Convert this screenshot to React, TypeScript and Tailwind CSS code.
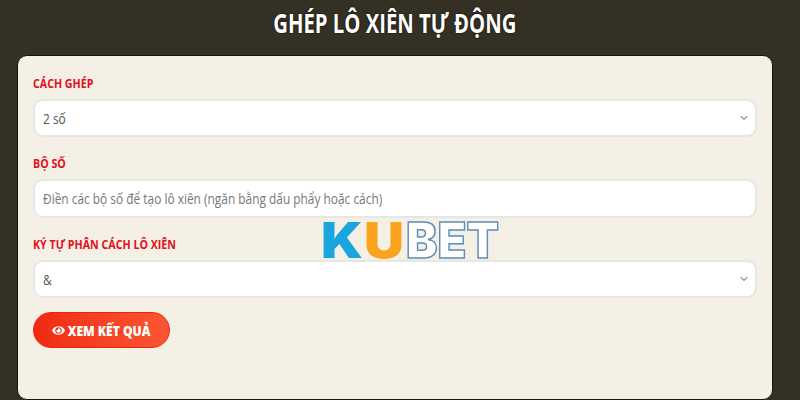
import { ChevronDown } from "lucide-react";
import { FaEye } from "react-icons/fa";

const labelClass =
  "block origin-left scale-x-[0.82] text-[13px] leading-[18px] font-bold whitespace-nowrap text-[#e0111b] uppercase";
const fieldClass =
  "flex items-center justify-between rounded-[10px] border-2 border-[#e6e6e6] bg-white pr-[5px] pl-[8px] text-[14px] text-[#555]";

const Field = ({ label, value }: { label: string; value: string }) => (
  <div className="flex flex-col gap-[7px]">
    <label className={labelClass}>{label}</label>
    <div className={`h-[38px] ${fieldClass}`}>
      <span className="origin-left scale-x-[0.85]">{value}</span>
      <ChevronDown size={12} strokeWidth={2} className="text-[#444]" />
    </div>
  </div>
);

const Logo = () => (
  <svg
    viewBox="0 0 180 42"
    className="absolute top-[219px] left-[321px] h-[42px] w-[180px] overflow-visible"
    fontFamily="Inter, sans-serif"
    fontWeight="900"
  >
    <text x="0" y="39" fontSize="50" fill="#1ba5de" textLength="42" lengthAdjust="spacingAndGlyphs">
      K
    </text>
    <text x="43" y="39" fontSize="50" fill="#fba31e" textLength="40" lengthAdjust="spacingAndGlyphs">
      U
    </text>
    <text
      x="85"
      y="39"
      fontSize="50"
      fill="#fff"
      stroke="#5f8db8"
      strokeWidth="1.5"
      textLength="93"
      lengthAdjust="spacingAndGlyphs"
    >
      BET
    </text>
  </svg>
);

export default function App() {
  return (
    <div className="relative h-[400px] w-[800px] overflow-hidden bg-[#343023] font-['Open_Sans','Noto_Sans',sans-serif]">
      <div className="w-[790px] px-[17px]">
        <h1 className="flex h-[55px] items-center justify-center pb-[8px] text-[26px] font-bold whitespace-nowrap text-white [text-shadow:0_0_2px_#000]">
          <span className="scale-x-[0.78]">GHÉP LÔ XIÊN TỰ ĐỘNG</span>
        </h1>
        <div className="flex h-[345px] flex-col gap-[17px] rounded-[10px] border border-[#17150e] bg-[#f5f0e6] px-[15px] pt-[18px]">
          <Field label="Cách ghép" value="2 số" />
          <div className="flex flex-col gap-[7px]">
            <label className={labelClass}>Bộ số</label>
            <div className={`h-[39px] ${fieldClass}`}>
              <span className="origin-left scale-x-[0.85] whitespace-nowrap text-[#777]">
                Điền các bộ số để tạo lô xiên (ngăn bằng dấu phẩy hoặc cách)
              </span>
            </div>
          </div>
          <Field label="Ký tự phân cách lô xiên" value="&" />
          <button className="mt-[-3px] flex h-[36px] w-[137px] items-center justify-center gap-[3px] rounded-full border border-[#f3220f] bg-gradient-to-r from-[#ee2a10] to-[#fb5533] pr-[1px] text-white">
            <FaEye size={13} />
            <span className="-mx-[7px] scale-x-[0.86] text-[14px] font-extrabold whitespace-nowrap">XEM KẾT QUẢ</span>
          </button>
        </div>
      </div>
      <Logo />
    </div>
  );
}
